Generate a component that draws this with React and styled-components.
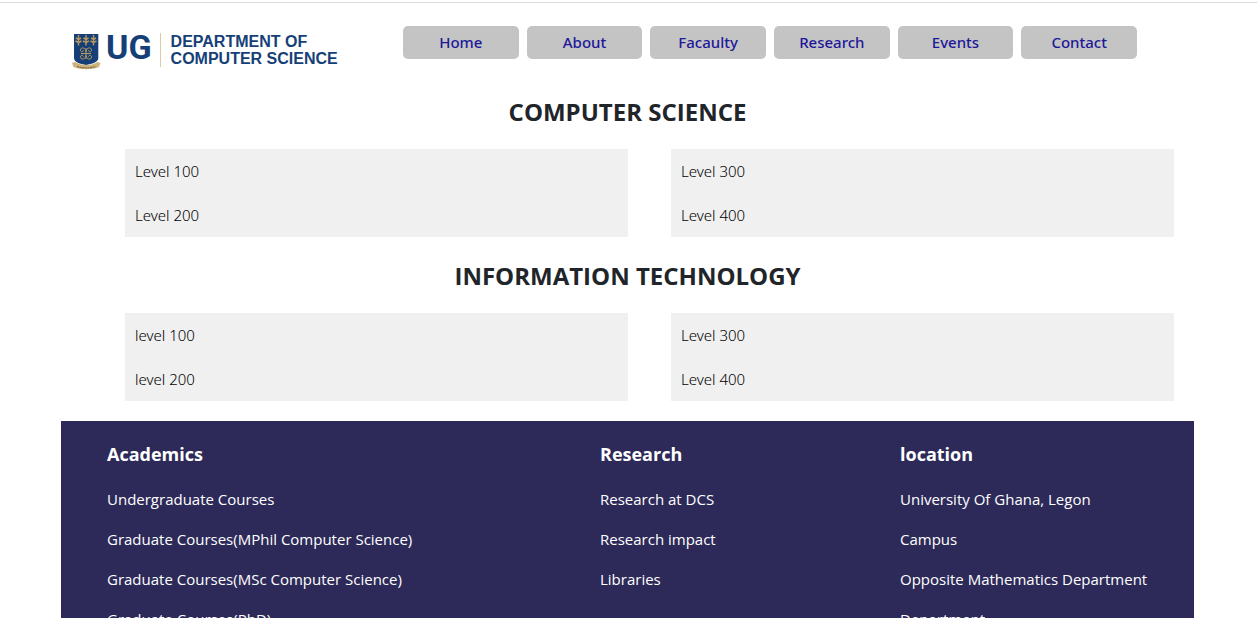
import React from "react";
import styled, { createGlobalStyle } from "styled-components";

const GlobalStyle = createGlobalStyle`
  * { box-sizing: border-box; }
  body {
    margin: 0;
    background: #fff;
    color: #212529;
    font-family: "Open Sans", "Noto Sans", sans-serif;
    font-size: 15px;
    line-height: 24px;
  }
  ul { list-style: none; margin: 0; padding: 0; }
  a { color: inherit; text-decoration: none; }
`;

const Page = styled.div`
  margin-top: 2px;
  border-top: 1px solid #dbdbdb;
  padding: 0 63px 0 61px;
`;

const Header = styled.header`
  display: flex;
  align-items: flex-start;
  padding: 23px 57px 0 10px;
`;

const Brand = styled.a`
  display: flex;
  align-items: center;
  flex: 0 0 332px;
  margin-top: 3px;
  color: #163f77;
`;

const Crest = styled.svg`
  width: 32px;
  height: 38px;
  margin-right: 3px;
`;

const Initials = styled.span`
  font: 700 34px/36px Roboto, sans-serif;
  padding-right: 8px;
  margin-bottom: 8px;
`;

const Department = styled.span`
  font: 700 16px/17px "Liberation Sans", Arial, sans-serif;
  border-left: 1px solid #d8cba6;
  padding-left: 10px;
  margin-bottom: 2px;
`;

const Nav = styled.nav`
  flex: 1;
  display: grid;
  grid-template-columns: repeat(6, 1fr);
  gap: 8px;
`;

const NavLink = styled.a`
  height: 33px;
  border-radius: 5px;
  background: #c4c4c4;
  color: #1d1899;
  font: 500 15px/33px "Noto Sans", sans-serif;
  text-align: center;
`;

const Title = styled.h2`
  margin: 0;
  font-size: 24px;
  font-weight: 700;
  line-height: 32px;
  text-align: center;
`;

const Programme = styled.section`
  padding-top: 23px;
`;

const Levels = styled.div`
  display: grid;
  grid-template-columns: 1fr 1fr;
  gap: 43px;
  margin-top: 21px;
  padding: 0 20px 0 64px;
`;

const LevelList = styled.ul`
  background: #f0f0f0;
`;

const Level = styled.li`
  padding: 10px;
  color: #000;
  font-family: "Noto Sans", sans-serif;
  font-weight: 300;
`;

const Footer = styled.footer`
  display: grid;
  grid-template-columns: 493fr 300fr 294fr;
  margin-top: 20px;
  padding: 19px 0 20px 46px;
  background: #2d2a59;
  color: #fff;
`;

const FooterTitle = styled.h3`
  margin: 0 0 11px;
  font-size: 18px;
  font-weight: 700;
  line-height: 28px;
`;

const FooterItem = styled.li`
  line-height: 40px;
`;

const navItems = ["Home", "About", "Facaulty", "Research", "Events", "Contact"];

const programmes = [
  { name: "COMPUTER SCIENCE", levels: [["Level 100", "Level 200"], ["Level 300", "Level 400"]] },
  { name: "INFORMATION TECHNOLOGY", levels: [["level 100", "level 200"], ["Level 300", "Level 400"]] },
];

const footerColumns = [
  {
    title: "Academics",
    links: true,
    items: [
      "Undergraduate Courses",
      "Graduate Courses(MPhil Computer Science)",
      "Graduate Courses(MSc Computer Science)",
      "Graduate Courses(PhD)",
    ],
  },
  { title: "Research", links: true, items: ["Research at DCS", "Research impact", "Libraries"] },
  {
    title: "location",
    items: ["University Of Ghana, Legon", "Campus", "Opposite Mathematics Department", "Department"],
  },
];

function CrestIcon() {
  return (
    <Crest viewBox="0 0 32 38" aria-hidden="true">
      <path d="M3 2H27.300V26C27.300 30 21 32 15 33C9 32 3 30 3 26Z" fill="#163f77" />
      <g stroke="#b99a5e" fill="none">
        {[7.5, 15, 22.5].map((x) => (
          <g key={x}>
            <path d={`M${x} 3V13.500`} strokeWidth="1.400" />
            <path
              d={`M${x - 2.5} 6L${x} 7.500L${x + 2.5} 6M${x - 3} 9L${x} 10.500L${x + 3} 9`}
              strokeWidth="1.500"
            />
          </g>
        ))}
        <path
          d="M15 16V27M10 21.500H20M15 19.500C14.500 15 9.500 15 9.500 18C9.500 20.500 12.500 20 12.500 18.500M15 19.500C15.500 15 20.500 15 20.500 18C20.500 20.500 17.500 20 17.500 18.500M15 23.500C14.500 28 9.500 28 9.500 25C9.500 22.500 12.500 23 12.500 24.500M15 23.500C15.500 28 20.500 28 20.500 25C20.500 22.500 17.500 23 17.500 24.500"
          strokeWidth="1"
        />
      </g>
      <path d="M1 31L4 30C10 34 21 34 26.500 30L29.500 31L28 35C21 38 10 38 2.500 35Z" fill="#cdb27c" />
      <path d="M6 34.500C12 36.300 19 36.300 24.500 34.500" stroke="#80704f" strokeWidth="1.300" strokeDasharray="2 .6" fill="none" />
    </Crest>
  );
}

export default function App() {
  return (
    <>
      <GlobalStyle />
      <Page>
        <Header>
          <Brand href="#">
            <CrestIcon />
            <Initials>UG</Initials>
            <Department>
              DEPARTMENT OF
              <br />
              COMPUTER SCIENCE
            </Department>
          </Brand>
          <Nav>
            {navItems.map((item) => (
              <NavLink key={item} href="#">{item}</NavLink>
            ))}
          </Nav>
        </Header>
        <main>
          {programmes.map(({ name, levels }) => (
            <Programme key={name}>
              <Title>{name}</Title>
              <Levels>
                {levels.map((column) => (
                  <LevelList key={column[0]}>
                    {column.map((level) => (
                      <Level key={level}><a href="#">{level}</a></Level>
                    ))}
                  </LevelList>
                ))}
              </Levels>
            </Programme>
          ))}
        </main>
        <Footer>
          {footerColumns.map(({ title, links, items }) => (
            <div key={title}>
              <FooterTitle>{title}</FooterTitle>
              <ul>
                {items.map((item) => (
                  <FooterItem key={item}>{links ? <a href="#">{item}</a> : item}</FooterItem>
                ))}
              </ul>
            </div>
          ))}
        </Footer>
      </Page>
    </>
  );
}
